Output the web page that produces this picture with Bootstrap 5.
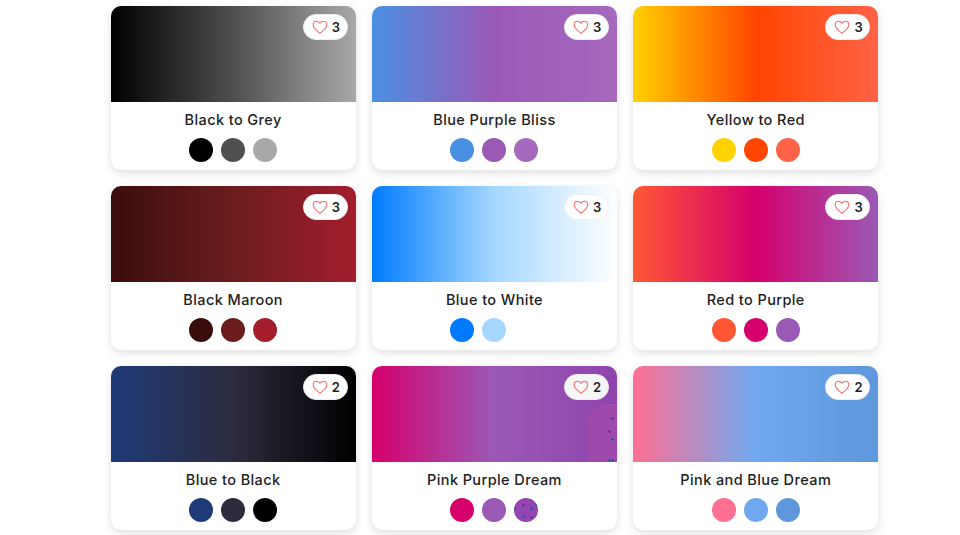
<!DOCTYPE html>
<html lang="en">
<head>
<meta charset="utf-8">
<title>Gradients</title>
<link href="https://cdn.jsdelivr.net/npm/bootstrap@5.3.0/dist/css/bootstrap.min.css" rel="stylesheet">
<style>
html,body{height:535px;overflow:hidden;background:#fff}
body{font-family:Inter,"Liberation Sans",sans-serif}
.grad-grid{display:grid;grid-template-columns:repeat(3,245.3px);gap:16px;padding:6px 0 0 110.5px}
.grad-card{height:164px;border-radius:10px;box-shadow:0 3px 8px rgba(0,0,0,.13);overflow:hidden}
.grad-top{height:96px;position:relative}
.like-pill{position:absolute;top:8px;right:8px;width:45px;height:26px;border-radius:13px;background:#fff;border:1px solid #eee;font-size:13px;font-weight:600;color:#222;padding-left:8px;gap:4px}
.like-pill svg{width:16px;height:16px;flex:none}
.like-pill span{padding-top:1px}
.like-pill.pill-tint{background:#f6f6f6}
.grad-name{font-size:14.5px;font-weight:500;line-height:18px;color:#222;margin:9px 0;letter-spacing:.4px}
.dot-swatch{width:24px;height:24px;border-radius:50%;flex:none}
.dot-noise{background-image:radial-gradient(circle,#2d4d8f 0 1px,transparent 1.2px),radial-gradient(circle,#2d4d8f 0 1px,transparent 1.2px),repeating-conic-gradient(#a8459f 0 25%,#8f42ad 0 50%);background-size:13px 11px,17px 9px,2px 2px;background-position:3px 2px,9px 6px,0 0}
.noise-patch{position:absolute;right:0;bottom:0;width:29px;height:58px;border-top-left-radius:22px 18px;background-image:radial-gradient(circle,#2d4d8f 0 1px,transparent 1.2px),radial-gradient(circle,#2d4d8f 0 1px,transparent 1.2px),repeating-conic-gradient(#b4489a 0 25%,#9a46a8 0 50%);background-size:11px 21px,9px 29px,2px 2px;background-position:19px 4px,17px 13px,0 0;background-repeat:repeat-y,repeat-y,repeat}
</style>
</head>
<body>
<div class="grad-grid">

<div class="card border-0 grad-card">
 <div class="grad-top" style="background:linear-gradient(90deg,#000,#4f4f4f,#a8a8a8)">
  <div class="like-pill d-flex align-items-center"><svg viewBox="0 0 16 16" fill="none" stroke="#f87171" stroke-width="1.1"><path d="M8 14.2C3.6 11 1.2 8.6 1.2 5.7 1.2 3.6 2.8 2.2 4.6 2.2c1.4 0 2.6.8 3.4 2.1.8-1.3 2-2.1 3.4-2.1 1.8 0 3.4 1.4 3.4 3.5 0 2.9-2.4 5.3-6.8 8.5z"/></svg><span>3</span></div>
 </div>
 <div class="grad-name text-center">Black to Grey</div>
 <div class="d-flex justify-content-center gap-2"><div class="dot-swatch" style="background:#000"></div><div class="dot-swatch" style="background:#4f4f4f"></div><div class="dot-swatch" style="background:#a8a8a8"></div></div>
</div>

<div class="card border-0 grad-card">
 <div class="grad-top" style="background:linear-gradient(90deg,#4a90e2,#9b59b6,#a569bd)">
  <div class="like-pill d-flex align-items-center"><svg viewBox="0 0 16 16" fill="none" stroke="#f87171" stroke-width="1.1"><path d="M8 14.2C3.6 11 1.2 8.6 1.2 5.7 1.2 3.6 2.8 2.2 4.6 2.2c1.4 0 2.6.8 3.4 2.1.8-1.3 2-2.1 3.4-2.1 1.8 0 3.4 1.4 3.4 3.5 0 2.9-2.4 5.3-6.8 8.5z"/></svg><span>3</span></div>
 </div>
 <div class="grad-name text-center">Blue Purple Bliss</div>
 <div class="d-flex justify-content-center gap-2"><div class="dot-swatch" style="background:#4a90e2"></div><div class="dot-swatch" style="background:#9b59b6"></div><div class="dot-swatch" style="background:#a569bd"></div></div>
</div>

<div class="card border-0 grad-card">
 <div class="grad-top" style="background:linear-gradient(90deg,#ffd200,#ff4500,#ff6347)">
  <div class="like-pill d-flex align-items-center"><svg viewBox="0 0 16 16" fill="none" stroke="#f87171" stroke-width="1.1"><path d="M8 14.2C3.6 11 1.2 8.6 1.2 5.7 1.2 3.6 2.8 2.2 4.6 2.2c1.4 0 2.6.8 3.4 2.1.8-1.3 2-2.1 3.4-2.1 1.8 0 3.4 1.4 3.4 3.5 0 2.9-2.4 5.3-6.8 8.5z"/></svg><span>3</span></div>
 </div>
 <div class="grad-name text-center">Yellow to Red</div>
 <div class="d-flex justify-content-center gap-2"><div class="dot-swatch" style="background:#ffd200"></div><div class="dot-swatch" style="background:#ff4500"></div><div class="dot-swatch" style="background:#ff6347"></div></div>
</div>

<div class="card border-0 grad-card">
 <div class="grad-top" style="background:linear-gradient(90deg,#3a0d0d,#6b1d1d,#a31d2d)">
  <div class="like-pill d-flex align-items-center"><svg viewBox="0 0 16 16" fill="none" stroke="#f87171" stroke-width="1.1"><path d="M8 14.2C3.6 11 1.2 8.6 1.2 5.7 1.2 3.6 2.8 2.2 4.6 2.2c1.4 0 2.6.8 3.4 2.1.8-1.3 2-2.1 3.4-2.1 1.8 0 3.4 1.4 3.4 3.5 0 2.9-2.4 5.3-6.8 8.5z"/></svg><span>3</span></div>
 </div>
 <div class="grad-name text-center">Black Maroon</div>
 <div class="d-flex justify-content-center gap-2"><div class="dot-swatch" style="background:#3a0d0d"></div><div class="dot-swatch" style="background:#6b1d1d"></div><div class="dot-swatch" style="background:#a31d2d"></div></div>
</div>

<div class="card border-0 grad-card">
 <div class="grad-top" style="background:linear-gradient(90deg,#007bff,#a6d8ff,#fff)">
  <div class="like-pill d-flex align-items-center"><svg viewBox="0 0 16 16" fill="none" stroke="#f87171" stroke-width="1.1"><path d="M8 14.2C3.6 11 1.2 8.6 1.2 5.7 1.2 3.6 2.8 2.2 4.6 2.2c1.4 0 2.6.8 3.4 2.1.8-1.3 2-2.1 3.4-2.1 1.8 0 3.4 1.4 3.4 3.5 0 2.9-2.4 5.3-6.8 8.5z"/></svg><span>3</span></div>
 </div>
 <div class="grad-name text-center">Blue to White</div>
 <div class="d-flex justify-content-center gap-2"><div class="dot-swatch" style="background:#007bff"></div><div class="dot-swatch" style="background:#a6d8ff"></div><div class="dot-swatch" style="background:#fff"></div></div>
</div>

<div class="card border-0 grad-card">
 <div class="grad-top" style="background:linear-gradient(90deg,#ff5733,#d6006c,#9b59b6)">
  <div class="like-pill d-flex align-items-center"><svg viewBox="0 0 16 16" fill="none" stroke="#f87171" stroke-width="1.1"><path d="M8 14.2C3.6 11 1.2 8.6 1.2 5.7 1.2 3.6 2.8 2.2 4.6 2.2c1.4 0 2.6.8 3.4 2.1.8-1.3 2-2.1 3.4-2.1 1.8 0 3.4 1.4 3.4 3.5 0 2.9-2.4 5.3-6.8 8.5z"/></svg><span>3</span></div>
 </div>
 <div class="grad-name text-center">Red to Purple</div>
 <div class="d-flex justify-content-center gap-2"><div class="dot-swatch" style="background:#ff5733"></div><div class="dot-swatch" style="background:#d6006c"></div><div class="dot-swatch" style="background:#9b59b6"></div></div>
</div>

<div class="card border-0 grad-card">
 <div class="grad-top" style="background:linear-gradient(90deg,#1e3a78,#2c2c3e,#000)">
  <div class="like-pill d-flex align-items-center"><svg viewBox="0 0 16 16" fill="none" stroke="#f87171" stroke-width="1.1"><path d="M8 14.2C3.6 11 1.2 8.6 1.2 5.7 1.2 3.6 2.8 2.2 4.6 2.2c1.4 0 2.6.8 3.4 2.1.8-1.3 2-2.1 3.4-2.1 1.8 0 3.4 1.4 3.4 3.5 0 2.9-2.4 5.3-6.8 8.5z"/></svg><span>2</span></div>
 </div>
 <div class="grad-name text-center">Blue to Black</div>
 <div class="d-flex justify-content-center gap-2"><div class="dot-swatch" style="background:#1e3a78"></div><div class="dot-swatch" style="background:#2c2c3e"></div><div class="dot-swatch" style="background:#000"></div></div>
</div>

<div class="card border-0 grad-card">
 <div class="grad-top" style="background:linear-gradient(90deg,#d6006c,#9b59b6,#8e44ad)">
  <div class="noise-patch"></div>
  <div class="like-pill pill-tint d-flex align-items-center"><svg viewBox="0 0 16 16" fill="none" stroke="#f87171" stroke-width="1.1"><path d="M8 14.2C3.6 11 1.2 8.6 1.2 5.7 1.2 3.6 2.8 2.2 4.6 2.2c1.4 0 2.6.8 3.4 2.1.8-1.3 2-2.1 3.4-2.1 1.8 0 3.4 1.4 3.4 3.5 0 2.9-2.4 5.3-6.8 8.5z"/></svg><span>2</span></div>
 </div>
 <div class="grad-name text-center">Pink Purple Dream</div>
 <div class="d-flex justify-content-center gap-2"><div class="dot-swatch" style="background:#d6006c"></div><div class="dot-swatch" style="background:#9b59b6"></div><div class="dot-swatch dot-noise"></div></div>
</div>

<div class="card border-0 grad-card">
 <div class="grad-top" style="background:linear-gradient(90deg,#ff6f91,#6fa8ef,#5f97dc)">
  <div class="like-pill d-flex align-items-center"><svg viewBox="0 0 16 16" fill="none" stroke="#f87171" stroke-width="1.1"><path d="M8 14.2C3.6 11 1.2 8.6 1.2 5.7 1.2 3.6 2.8 2.2 4.6 2.2c1.4 0 2.6.8 3.4 2.1.8-1.3 2-2.1 3.4-2.1 1.8 0 3.4 1.4 3.4 3.5 0 2.9-2.4 5.3-6.8 8.5z"/></svg><span>2</span></div>
 </div>
 <div class="grad-name text-center">Pink and Blue Dream</div>
 <div class="d-flex justify-content-center gap-2"><div class="dot-swatch" style="background:#ff6f91"></div><div class="dot-swatch" style="background:#6fa8ef"></div><div class="dot-swatch" style="background:#5f97dc"></div></div>
</div>

</div>
<script src="https://cdn.jsdelivr.net/npm/bootstrap@5.3.0/dist/js/bootstrap.bundle.min.js"></script>
</body>
</html>
